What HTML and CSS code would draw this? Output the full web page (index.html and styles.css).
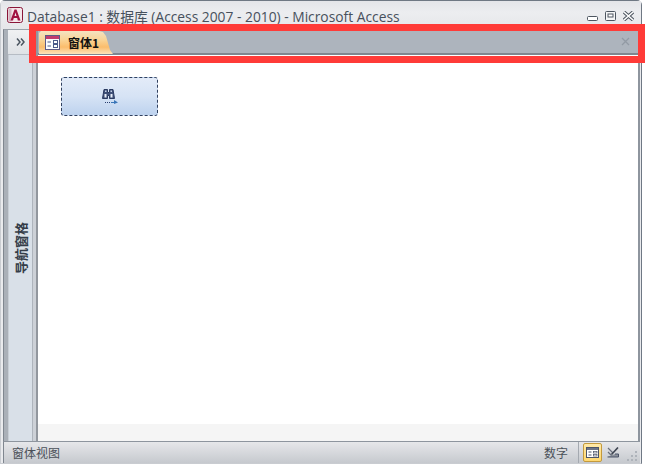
FILE: index.html
```
<!DOCTYPE html>
<html lang="zh">
<head>
<meta charset="utf-8">
<title>Database1</title>
<link rel="stylesheet" href="styles.css">
</head>
<body>
<div class="window">
  <header class="titlebar">
    <svg class="app-icon" width="16" height="16" viewBox="0 0 16 16"><rect x="0.5" y="0.5" width="15" height="15" rx="2" fill="#f4e6ea" stroke="#8a1538"/><rect x="1.5" y="1.5" width="3" height="13" fill="#d4b3bf"/><path d="M3.5 13.5 L7.5 2.5 H9.5 L13.5 13.5 H10.8 L10.2 11 H6.8 L6 13.5Z M7.5 9 H9.5 L8.5 5.4Z" fill="#a01040" fill-rule="evenodd"/></svg>
    <span class="title">Database1 : 数据库 (Access 2007 - 2010) - Microsoft Access</span>
    <div class="win-controls">
      <svg width="11" height="5" viewBox="0 0 11 5"><rect x="0.5" y="0.5" width="10" height="4" rx="1" fill="#fff" stroke="#4d5560"/></svg>
      <svg width="11" height="10" viewBox="0 0 11 10"><rect x="0.5" y="0.5" width="10" height="9" rx="1" fill="#f4f5f6" stroke="#4d5560"/><rect x="3" y="3" width="5" height="3" fill="#fff" stroke="#4d5560" stroke-width="1"/></svg>
      <svg width="11" height="10" viewBox="0 0 11 10"><path d="M1 1 L10 9 M10 1 L1 9" stroke="#4d5560" stroke-width="3.4"/><path d="M1 1 L10 9 M10 1 L1 9" stroke="#fff" stroke-width="1.6"/></svg>
    </div>
  </header>
  <div class="main">
    <aside class="nav">
      <div class="nav-toggle">
        <svg width="9" height="8" viewBox="0 0 9 8"><path d="M1 0.5 L4 4 L1 7.5 M5 0.5 L8 4 L5 7.5" fill="none" stroke="#4b5560" stroke-width="1.5"/></svg>
      </div>
      <div class="nav-pane"><span class="nav-label">导航窗格</span></div>
    </aside>
    <section class="doc">
      <div class="tabstrip">
        <div class="tab">
          <svg width="15" height="15" viewBox="0 0 15 15"><rect x="0.5" y="0.5" width="14" height="14" fill="#fbfbfd" stroke="#5d5a86"/><rect x="1" y="1" width="13" height="3" fill="#c23a6e"/><path d="M2.5 7 H6 M2.5 11 H6" stroke="#4a5a8a"/><rect x="8.5" y="5.5" width="4" height="3" fill="#fff" stroke="#4a5a8a"/><rect x="8.5" y="9.5" width="4" height="3" fill="#fff" stroke="#4a5a8a"/></svg>
          <span class="tab-label">窗体1</span>
        </div>
        <svg class="tab-close" width="9" height="9" viewBox="0 0 9 9"><path d="M1 1 L8 8 M8 1 L1 8" stroke="#929aa4" stroke-width="1.3"/></svg>
      </div>
      <div class="canvas">
        <div class="form-btn">
          <svg width="16" height="15" viewBox="0 0 16 15"><path d="M2 0.5 H5.5 V3.5 H7.5 V0.5 H11 L12.5 9.5 H7.5 V6.5 H5.5 V9.5 H0.5Z" fill="#3f5078" stroke="#2a3a60"/><path d="M2.5 5 H4.5 V8.5 H2.5Z M8.5 5 H10.5 V8.5 H8.5Z" fill="#e8eef8"/><path d="M3 1.5 H4.5 V3 H3Z M8.5 1.5 H10 V3 H8.5Z" fill="#c4d0e6"/><path d="M3 13.5 h1 M5 13.5 h1 M7 13.5 h1" stroke="#2a3f70"/><path d="M9 13.5 H13" stroke="#3a76b8"/><path d="M12 11 L16 13.5 L12 15Z" fill="#3a76b8"/></svg>
        </div>
      </div>
      <div class="canvas-foot"></div>
    </section>
  </div>
  <footer class="statusbar">
    <span class="status-left">窗体视图</span>
    <span class="status-num">数字</span>
    <div class="views">
      <div class="view-btn is-active">
        <svg width="13" height="11" viewBox="0 0 13 11"><rect x="0.5" y="0.5" width="12" height="10" fill="#fff" stroke="#4b5468"/><rect x="1" y="1" width="11" height="2" fill="#6c7486"/><path d="M2.5 5 H5.5 M2.5 8 H5.5" stroke="#4b5468"/><rect x="7.5" y="4.5" width="3.5" height="1.5" fill="#fff" stroke="#4b5468" stroke-width=".7"/><rect x="7.5" y="7.5" width="3.5" height="1.5" fill="#fff" stroke="#4b5468" stroke-width=".7"/></svg>
      </div>
      <div class="view-btn">
        <svg width="12" height="11" viewBox="0 0 12 11"><path d="M1 1 L6 6 M1 5 L5 9" stroke="#6a707c" stroke-width="1.2"/><path d="M0.5 10 H11.5 V7 H8" fill="#8d929c" stroke="#4b5468"/><path d="M4.5 7.5 L11 0.5" stroke="#3d4350" stroke-width="1.6"/></svg>
      </div>
    </div>
    <svg class="grip" width="13" height="13" viewBox="0 0 13 13"><g fill="#aeb3ba"><rect x="9" y="1" width="2" height="2"/><rect x="5" y="5" width="2" height="2"/><rect x="9" y="5" width="2" height="2"/><rect x="1" y="9" width="2" height="2"/><rect x="5" y="9" width="2" height="2"/><rect x="9" y="9" width="2" height="2"/></g></svg>
  </footer>
</div>
<div class="highlight"></div>
</body>
</html>
```
FILE: styles.css
```
* { box-sizing: border-box; }
html, body { margin: 0; height: 100%; background: #fff; overflow: hidden; }
body { font-family: "Noto Sans CJK SC", "Liberation Sans", sans-serif; position: relative; }
.window {
  width: 642px; height: 464px;
  display: flex; flex-direction: column;
  background: #e9eaed;
  border: 1px solid #6f7884; border-bottom-color: #c9ccd1;
  border-left-color: #c9ccd1;
  border-radius: 5px 5px 0 0;
}
.titlebar {
  height: 28px; flex: none; display: flex; align-items: center; padding: 2px 7px 0 6px;
  background: linear-gradient(#e4e5e9, #ecedf0 40%, #e6e7ea);
}
.app-icon { flex: none; margin-top: -2px; }
.title { margin-left: 4px; font: 13.8px "Open Sans", "Noto Sans CJK SC", sans-serif; color: #47505c; white-space: nowrap; flex: 1; }
.win-controls { display: flex; gap: 7px; align-items: flex-end; margin-top: -1px; }
.main { flex: 1; display: flex; min-height: 0; margin: 0 1px 0 2px; padding-left: 4px; background: #aab0b8; border-left: 1px solid #7f868f; border-top: 1px solid #9aa1a9; }
.nav { width: 28px; flex: none; display: flex; flex-direction: column; padding-right: 3px; background: #cdd1d7; }
.nav-toggle { height: 25px; flex: none; display: flex; align-items: center; justify-content: center; background: linear-gradient(#f0f1f3, #dfe2e6); border-bottom: 1px solid #b6bcc4; }
.nav-pane { flex: 1; display: flex; align-items: center; justify-content: center; background: #d9e0e8; border-left: 1px solid #c8ced6; border-right: 1px solid #aeb4bc; }
.nav-label { writing-mode: vertical-rl; text-orientation: sideways; transform: rotate(180deg); font-size: 13px; font-weight: 700; color: #343c48; }
.doc { flex: 1; min-width: 0; display: flex; flex-direction: column; border-left: 2px solid #92979e; border-right: 2px solid #8e959e; }
.tabstrip { height: 25px; flex: none; display: flex; align-items: flex-end; justify-content: space-between; background: #adb4bd; border-bottom: 2px solid #7f868f; padding: 0 8px 0 1px; }
.tab { height: 23px; width: 74px; display: flex; align-items: center; gap: 8px; padding-left: 6px; margin-bottom: -1px; clip-path: polygon(0 2px, 2px 0, 60px 0, 64px 1px, 67px 5px, 71px 19px, 74px 23px, 0 23px); background: linear-gradient(#f3e3c2, #fad394 40%, #fbbd6c 70%, #fde3bb); }
.tab-label { font-size: 12px; font-weight: 700; color: #111; white-space: nowrap; }
.tab-close { align-self: center; flex: none; }
.canvas { flex: 1; background: #fff; padding: 22px 0 0 23px; }
.canvas-foot { height: 17px; flex: none; background: #f5f5f5; }
.form-btn { width: 97px; height: 39px; display: flex; align-items: center; justify-content: center; border: 1px dashed #30405f; border-radius: 3px; background: linear-gradient(#e3ebf8, #d6e3f5 50%, #bdd2ee); }
.statusbar { height: 22px; flex: none; display: flex; align-items: center; margin: 0 1px 0 2px; padding-left: 8px; background: linear-gradient(#e6e7ea, #c6c9ce); border-left: 1px solid #7f868f; border-top: 1px solid #8e959e; color: #4a5058; font-size: 12px; }
.status-left { flex: 1; }
.status-num { margin-right: 10px; }
.views { display: flex; align-items: center; gap: 2px; height: 100%; border-left: 1px solid #a4a9b0; padding-left: 4px; }
.view-btn { width: 18px; height: 19px; display: flex; align-items: center; justify-content: center; }
.view-btn.is-active { width: 19px; background: linear-gradient(#ffe9a8, #ffd870); border: 1px solid #c49a3c; border-radius: 2px; }
.grip { margin-left: 4px; margin-right: 1px; align-self: flex-end; }
.highlight { position: absolute; left: 29px; top: 24px; width: 616px; height: 39px; border: 7px solid #ff3b38; pointer-events: none; }
```
